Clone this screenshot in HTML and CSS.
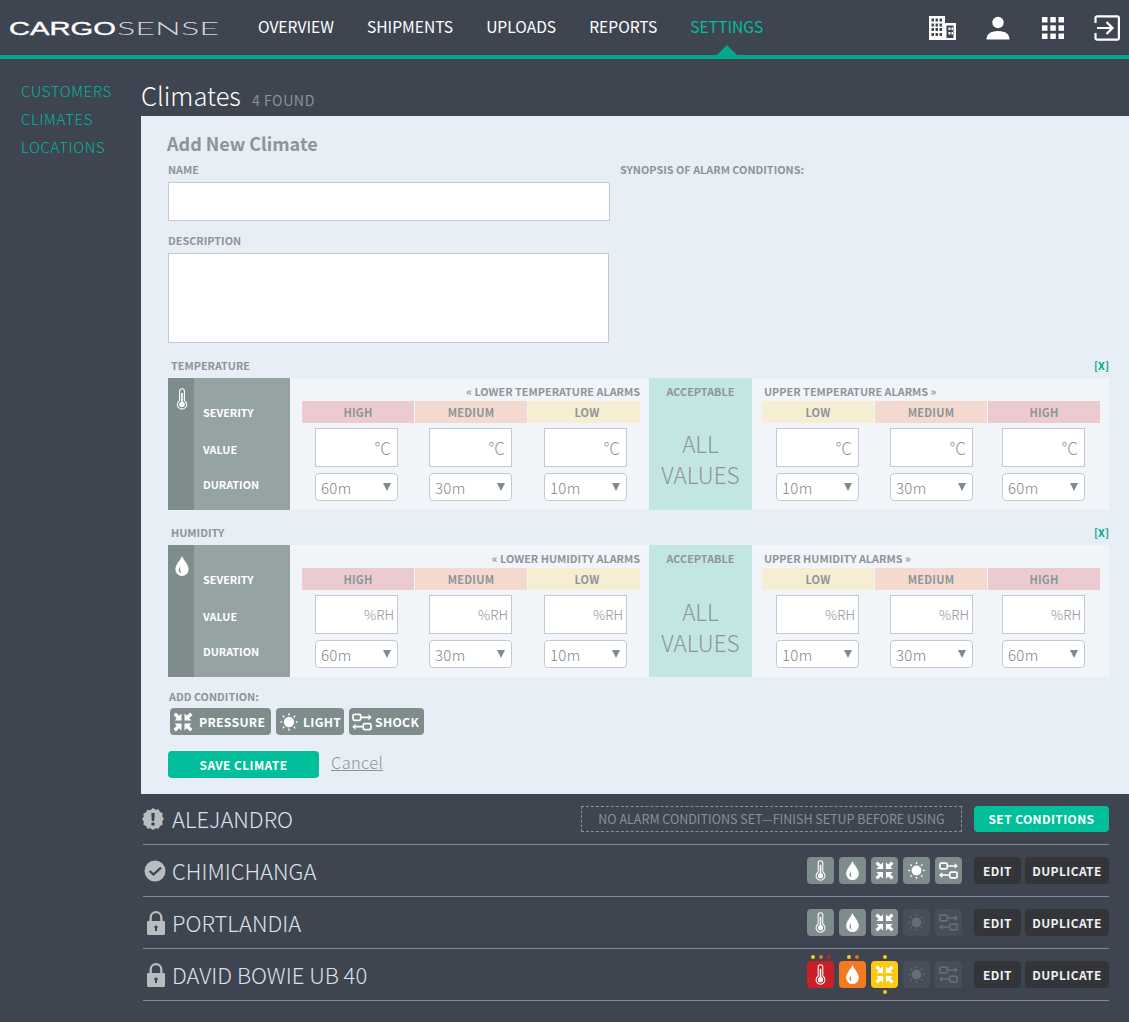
FILE: index.html
```html
<!DOCTYPE html>
<html lang="en">
<head>
<meta charset="utf-8">
<title>Climates</title>
<link rel="stylesheet" href="styles.css">
</head>
<body>
<svg class="defs" width="0" height="0">
  <symbol id="i-thermo" viewBox="0 0 24 24">
    <path d="M9.6 13.6V4.2a2.4 2.4 0 0 1 4.8 0v9.4a4.6 4.6 0 1 1-4.8 0z" fill="none" stroke="currentColor" stroke-width="1.1"/>
    <circle cx="12" cy="17.4" r="2.7" fill="currentColor"/>
    <rect x="11.2" y="6" width="1.6" height="10" fill="currentColor"/>
  </symbol>
  <symbol id="i-drop" viewBox="0 0 24 24">
    <path fill-rule="evenodd" d="M12 2c1 3.4 6.6 8.300 6.600 13.400A6.600 6.600 0 0 1 5.400 15.400C5.400 10.300 11 5.400 12 2zM10.300 12.500c-1.300 1.800-1.900 3.200-1.300 4.700.4 1 1.200 1.700 2.200 2-.9-1.800-1.300-3.900-.9-6.700z" fill="currentColor"/>
  </symbol>
  <symbol id="i-compress" viewBox="0 0 24 24">
    <g fill="currentColor">
      <path d="M10.500 10.500H3.500L5.800 8.200 2.500 4.900 4.900 2.500 8.200 5.800 10.500 3.500z"/>
      <path d="M13.500 10.500H20.500L18.200 8.200 21.500 4.900 19.100 2.500 15.800 5.800 13.500 3.500z"/>
      <path d="M10.500 13.500H3.500L5.800 15.800 2.500 19.100 4.900 21.500 8.200 18.200 10.500 20.500z"/>
      <path d="M13.500 13.500H20.500L18.200 15.800 21.500 19.100 19.100 21.500 15.800 18.200 13.500 20.500z"/>
    </g>
  </symbol>
  <symbol id="i-sun" viewBox="-2 -2 28 28">
    <g fill="currentColor">
      <circle cx="12" cy="12" r="6"/>
      <path d="M12 1l1.300 3h-2.600zM12 23l1.300-3h-2.600zM1 12l3-1.300v2.600zM23 12l-3-1.300v2.600zM4.200 4.200l3 1.100-1.900 1.900zM19.800 4.200l-3 1.100 1.900 1.900zM4.200 19.800l3-1.100-1.900-1.900zM19.800 19.800l-3-1.100 1.900-1.900z"/>
    </g>
  </symbol>
  <symbol id="i-shock" viewBox="-2 -2 28 28">
    <g fill="none" stroke="currentColor" stroke-width="2">
      <rect x="1.500" y="3" width="9" height="7" rx="1.800"/>
      <rect x="13.500" y="14" width="9" height="7" rx="1.800"/>
      <path d="M10 6.500h10M14 17.500H4"/>
    </g>
    <path d="M19.500 3l4 3.500-4 3.500zM4.500 14l-4 3.500 4 3.500z" fill="currentColor"/>
  </symbol>
  <symbol id="i-alert" viewBox="0 0 24 24">
    <path fill-rule="evenodd" d="M12 1l2.600 1.700 3-.5 1.400 2.700 2.700 1.400-.5 3L22.900 12l-1.700 2.600.5 3-2.700 1.400-1.400 2.700-3-.5L12 23l-2.600-1.700-3 .5L5 19.100l-2.700-1.400.5-3L1.100 12l1.700-2.600-.5-3L5 5.500l1.400-2.700 3 .5zM10.300 6l.5 8h2.400l.5-8zM12 15.200a1.800 1.800 0 1 0 0 3.600 1.800 1.800 0 0 0 0-3.600z" fill="currentColor"/>
  </symbol>
  <symbol id="i-check" viewBox="0 0 24 24">
    <path fill-rule="evenodd" d="M12 1.500a10.500 10.500 0 1 1 0 21 10.500 10.500 0 0 1 0-21zM17.200 7.800L10.500 14 7.300 11.200 5.800 12.800l4.700 4.200 8.200-7.600z" fill="currentColor"/>
  </symbol>
  <symbol id="i-lock" viewBox="0 0 24 24">
    <path fill-rule="evenodd" d="M12 0a6.600 6.600 0 0 1 6.500 6.600V10h1.300c.7 0 1.200.5 1.200 1.200v11.600c0 .7-.5 1.200-1.200 1.200H4.200C3.500 24 3 23.500 3 22.800V11.200C3 10.500 3.500 10 4.200 10h1.300V6.600A6.600 6.600 0 0 1 12 0zM12 2.300a4.300 4.300 0 0 0-4.200 4.300V10h8.400V6.600A4.300 4.300 0 0 0 12 2.300zM12 14.500a1.700 1.700 0 0 0-1 3.100V20h2v-2.400a1.700 1.700 0 0 0-1-3.100z" fill="currentColor"/>
  </symbol>
</svg>

<header class="topbar">
  <svg class="logo" width="212" height="26" viewBox="0 0 212 26" role="img" aria-label="CargoSense">
    <text class="logo-bold" x="0" y="20" textLength="107" lengthAdjust="spacingAndGlyphs">CARGO</text>
    <text class="logo-thin" x="108" y="20" textLength="102" lengthAdjust="spacingAndGlyphs">SENSE</text>
  </svg>
  <nav class="mainnav">
    <a>OVERVIEW</a>
    <a>SHIPMENTS</a>
    <a>UPLOADS</a>
    <a>REPORTS</a>
    <a class="active">SETTINGS</a>
  </nav>
  <div class="topicons">
    <svg width="29" height="26" viewBox="0 0 29 26">
      <path fill-rule="evenodd" fill="#fff" d="M1 1h16v7h11v17H1zM3.500 3.500v3h2.500v-3zM7.500 3.500v3h2.500v-3zM11.500 3.500v3h2.500v-3zM3.500 8.500v3h2.500v-3zM7.500 8.500v3h2.500v-3zM11.500 8.500v3h2.500v-3zM3.500 13v3h2.500v-3zM7.500 13v3h2.500v-3zM11.500 13v3h2.500v-3zM3.500 18v3h2.500v-3zM7.500 18v3h2.500v-3zM11.500 18v3h2.500v-3zM18.500 10.500v12.500h7V10.500zM20.500 12.500h2v2.500h-2zM20.500 17h2v2.500h-2z"/>
      <path fill="#fff" d="M23.500 12.500h1.500v2.500h-1.500zM23.500 17h1.500v2.500h-1.500z"/>
    </svg>
    <svg width="24" height="24" viewBox="0 0 24 24">
      <circle cx="12" cy="6.500" r="5.700" fill="#fff"/>
      <path d="M.500 23.500c0-5 3.500-8.500 11.500-8.500s11.500 3.500 11.500 8.500z" fill="#fff"/>
    </svg>
    <svg class="icon-grid" width="24" height="24" viewBox="0 0 24 24" fill="#fff">
      <rect x="1" y="1" width="5.500" height="5.500"/><rect x="9.300" y="1" width="5.500" height="5.500"/><rect x="17.500" y="1" width="5.500" height="5.500"/>
      <rect x="1" y="9.300" width="5.500" height="5.500"/><rect x="9.300" y="9.300" width="5.500" height="5.500"/><rect x="17.500" y="9.300" width="5.500" height="5.500"/>
      <rect x="1" y="17.500" width="5.500" height="5.500"/><rect x="9.300" y="17.500" width="5.500" height="5.500"/><rect x="17.500" y="17.500" width="5.500" height="5.500"/>
    </svg>
    <svg width="26" height="26" viewBox="0 0 26 26" fill="none" stroke="#fff" stroke-width="2.200">
      <path d="M1.500 8V3a1.700 1.700 0 0 1 1.700-1.700h20a1.700 1.700 0 0 1 1.700 1.700v20a1.700 1.700 0 0 1-1.700 1.700h-20A1.700 1.700 0 0 1 1.500 23v-5"/>
      <path d="M3 13h15M12.500 7l6 6-6 6"/>
    </svg>
  </div>
</header>

<div class="page">
  <aside class="sidebar">
    <a>CUSTOMERS</a>
    <a>CLIMATES</a>
    <a>LOCATIONS</a>
  </aside>
  <main class="content">
    <div class="titlebar">
      <h1>Climates</h1>
      <span class="count">4 FOUND</span>
    </div>

    <section class="panel">
      <h2>Add New Climate</h2>
      <div class="basics">
        <div class="basics-fields">
          <label class="flabel">NAME</label>
          <input class="field field-name" type="text">
          <label class="flabel flabel-desc">DESCRIPTION</label>
          <textarea class="field field-desc"></textarea>
        </div>
        <div class="flabel synopsis">SYNOPSIS OF ALARM CONDITIONS:</div>
      </div>

      <div class="cond-head cond-first"><span>TEMPERATURE</span><a class="remove">[X]</a></div>
      <div class="cond">
        <div class="cond-icon"><svg width="24" height="24"><use href="#i-thermo"/></svg></div>
        <div class="cond-labels"><span class="l-sev">SEVERITY</span><span class="l-val">VALUE</span><span class="l-dur">DURATION</span></div>
        <div class="side side-lower">
          <div class="side-title">« LOWER TEMPERATURE ALARMS</div>
          <div class="levels">
            <div class="level"><div class="sev high">HIGH</div><div class="val at13 deg">°C</div><div class="sel at13"><span>60m</span><i></i></div></div>
            <div class="level"><div class="sev med">MEDIUM</div><div class="val at14 deg">°C</div><div class="sel at14"><span>30m</span><i></i></div></div>
            <div class="level"><div class="sev low low-shift">LOW</div><div class="val at16 deg">°C</div><div class="sel at16"><span>10m</span><i></i></div></div>
          </div>
        </div>
        <div class="ok"><div class="ok-title">ACCEPTABLE</div><div class="ok-val">ALL<br>VALUES</div></div>
        <div class="side side-upper">
          <div class="side-title">UPPER TEMPERATURE ALARMS »</div>
          <div class="levels">
            <div class="level"><div class="sev low">LOW</div><div class="val at14 deg">°C</div><div class="sel at14"><span>10m</span><i></i></div></div>
            <div class="level"><div class="sev med">MEDIUM</div><div class="val at15 deg">°C</div><div class="sel at15"><span>30m</span><i></i></div></div>
            <div class="level"><div class="sev high">HIGH</div><div class="val at14 deg">°C</div><div class="sel at14"><span>60m</span><i></i></div></div>
          </div>
        </div>
      </div>

      <div class="cond-head"><span>HUMIDITY</span><a class="remove">[X]</a></div>
      <div class="cond">
        <div class="cond-icon"><svg width="24" height="24"><use href="#i-drop"/></svg></div>
        <div class="cond-labels"><span class="l-sev">SEVERITY</span><span class="l-val">VALUE</span><span class="l-dur">DURATION</span></div>
        <div class="side side-lower">
          <div class="side-title">« LOWER HUMIDITY ALARMS</div>
          <div class="levels">
            <div class="level"><div class="sev high">HIGH</div><div class="val at13 rh">%RH</div><div class="sel at13"><span>60m</span><i></i></div></div>
            <div class="level"><div class="sev med">MEDIUM</div><div class="val at14 rh">%RH</div><div class="sel at14"><span>30m</span><i></i></div></div>
            <div class="level"><div class="sev low low-shift">LOW</div><div class="val at16 rh">%RH</div><div class="sel at16"><span>10m</span><i></i></div></div>
          </div>
        </div>
        <div class="ok"><div class="ok-title">ACCEPTABLE</div><div class="ok-val ok-val-rh">ALL<br>VALUES</div></div>
        <div class="side side-upper">
          <div class="side-title">UPPER HUMIDITY ALARMS »</div>
          <div class="levels">
            <div class="level"><div class="sev low">LOW</div><div class="val at14 rh">%RH</div><div class="sel at14"><span>10m</span><i></i></div></div>
            <div class="level"><div class="sev med">MEDIUM</div><div class="val at15 rh">%RH</div><div class="sel at15"><span>30m</span><i></i></div></div>
            <div class="level"><div class="sev high">HIGH</div><div class="val at14 rh">%RH</div><div class="sel at14"><span>60m</span><i></i></div></div>
          </div>
        </div>
      </div>

      <div class="flabel add-label">ADD CONDITION:</div>
      <div class="add-row">
        <button class="add-btn add-pressure"><svg width="24" height="24"><use href="#i-compress"/></svg>PRESSURE</button>
        <button class="add-btn add-light"><svg width="24" height="24"><use href="#i-sun"/></svg>LIGHT</button>
        <button class="add-btn add-shock"><svg width="24" height="24"><use href="#i-shock"/></svg>SHOCK</button>
      </div>
      <div class="actions">
        <button class="save">SAVE CLIMATE</button>
        <a class="cancel">Cancel</a>
      </div>
    </section>

    <section class="list">
      <div class="row">
        <svg class="status st-alert" width="24" height="24"><use href="#i-alert"/></svg>
        <div class="row-name">ALEJANDRO</div>
        <div class="notice">NO ALARM CONDITIONS SET—FINISH SETUP BEFORE USING</div>
        <button class="set-btn">SET CONDITIONS</button>
      </div>
      <div class="row">
        <svg class="status st-check" width="24" height="24"><use href="#i-check"/></svg>
        <div class="row-name">CHIMICHANGA</div>
        <div class="chips">
          <span class="chip"><svg width="23" height="23"><use href="#i-thermo"/></svg></span>
          <span class="chip"><svg width="23" height="23"><use href="#i-drop"/></svg></span>
          <span class="chip"><svg width="23" height="23"><use href="#i-compress"/></svg></span>
          <span class="chip"><svg width="23" height="23"><use href="#i-sun"/></svg></span>
          <span class="chip"><svg width="23" height="23"><use href="#i-shock"/></svg></span>
        </div>
        <button class="dark-btn btn-edit">EDIT</button>
        <button class="dark-btn btn-dup">DUPLICATE</button>
      </div>
      <div class="row">
        <svg class="status st-lock" width="24" height="24"><use href="#i-lock"/></svg>
        <div class="row-name">PORTLANDIA</div>
        <div class="chips">
          <span class="chip"><svg width="23" height="23"><use href="#i-thermo"/></svg></span>
          <span class="chip"><svg width="23" height="23"><use href="#i-drop"/></svg></span>
          <span class="chip"><svg width="23" height="23"><use href="#i-compress"/></svg></span>
          <span class="chip chip-off"><svg width="23" height="23"><use href="#i-sun"/></svg></span>
          <span class="chip chip-off"><svg width="23" height="23"><use href="#i-shock"/></svg></span>
        </div>
        <button class="dark-btn btn-edit">EDIT</button>
        <button class="dark-btn btn-dup">DUPLICATE</button>
      </div>
      <div class="row">
        <svg class="status st-lock" width="24" height="24"><use href="#i-lock"/></svg>
        <div class="row-name">DAVID BOWIE UB 40</div>
        <div class="chips">
          <span class="chip chip-red"><span class="dots"><b class="d-y"></b><b class="d-o"></b><b class="d-r"></b></span><svg width="23" height="23"><use href="#i-thermo"/></svg></span>
          <span class="chip chip-orange"><span class="dots"><b class="d-y"></b><b class="d-o"></b></span><svg width="23" height="23"><use href="#i-drop"/></svg></span>
          <span class="chip chip-yellow"><span class="dots"><b class="d-y"></b></span><svg width="23" height="23"><use href="#i-compress"/></svg><span class="dots dots-below"><b class="d-y"></b></span></span>
          <span class="chip chip-off"><svg width="23" height="23"><use href="#i-sun"/></svg></span>
          <span class="chip chip-off"><svg width="23" height="23"><use href="#i-shock"/></svg></span>
        </div>
        <button class="dark-btn btn-edit">EDIT</button>
        <button class="dark-btn btn-dup">DUPLICATE</button>
      </div>
    </section>
  </main>
</div>
</body>
</html>
```

FILE: styles.css
```css
* { box-sizing: border-box; }
html, body { margin: 0; padding: 0; height: 1022px; overflow: hidden; }
body {
  background: #3e4550;
  font-family: "Noto Sans CJK SC", "Noto Sans", sans-serif;
  color: #8f9499;
}
.defs { position: absolute; }
button { font-family: inherit; border: 0; padding: 0; }

/* top bar */
.topbar {
  height: 59px;
  border-bottom: 4px solid #00a98a;
  display: flex;
  align-items: center;
  padding: 0 9px 0 9px;
}
.logo { flex: none; display: block; margin-top: 1px; }
.logo text { font-size: 18px; }
.logo-bold { font-family: "Liberation Sans", sans-serif; fill: #fff; stroke: #fff; stroke-width: .35px; }
.logo-thin { font-family: "Lato", sans-serif; font-weight: 300; fill: #d5d8db; }
.mainnav { display: flex; gap: 33px; margin-left: 37px; }
.mainnav a {
  position: relative;
  color: #fff;
  font-size: 15.600px;
  line-height: 53px;
  padding-bottom: 2px;
  white-space: nowrap;
}
.mainnav a.active { color: #00bf9a; }
.mainnav a.active::after {
  content: "";
  position: absolute;
  left: 50%;
  bottom: 0;
  margin-left: -10px;
  border-left: 10px solid transparent;
  border-right: 10px solid transparent;
  border-bottom: 10px solid #00a98a;
}
.topicons { margin-left: auto; display: flex; align-items: center; gap: 29px; }
.topicons svg { display: block; }
.topicons .icon-grid { margin-left: 2px; }

.page { display: flex; }
.sidebar {
  width: 141px;
  flex: none;
  padding: 18px 0 0 21px;
  display: flex;
  flex-direction: column;
}
.sidebar a {
  color: #00b594;
  font-size: 15px;
  line-height: 28px;
  font-weight: 300;
  letter-spacing: .6px;
}
.content { flex: 1; min-width: 0; }
.titlebar { height: 57px; display: flex; align-items: baseline; padding-top: 16px; }
.titlebar h1 { margin: 0; color: #fff; font-size: 25.500px; line-height: 40px; font-weight: 300; }
.count { margin-left: 11px; font-size: 14.200px; letter-spacing: .5px; color: #8a9097; }

/* form panel */
.panel { background: #e8eef5; height: 678px; padding: 15px 20px 0 27px; }
.panel h2 { margin: 0 0 0 -1px; font-size: 18px; line-height: 24px; font-weight: 700; color: #8f9499; }
.flabel { display: block; font-size: 10.850px; line-height: 12px; font-weight: 700; color: #8f9499; }
.basics { display: flex; margin-top: 8px; }
.basics-fields { width: 442px; flex: none; }
.field { display: block; background: #fff; border: 1px solid #c4cad3; margin: 0; padding: 0; resize: none; }
.field-name { width: 442px; height: 39px; margin-top: 7px; }
.flabel-desc { margin-top: 13px; }
.field-desc { width: 441px; height: 90px; margin-top: 7px; }
.synopsis { margin-left: 10px; }

.cond-head { display: flex; justify-content: space-between; margin: 16px 0 7px 3px; font-size: 10.850px; line-height: 12px; font-weight: 700; }
.cond-first { margin-top: 16px; }
.remove { color: #00a98a; }
.cond { display: flex; height: 132px; background: #f1f5f9; width: 941px; }
.cond-icon { width: 26px; flex: none; background: #7e8c8c; color: #fff; padding-top: 9px; }
.cond-icon svg { display: block; margin-left: 2px; }
.cond-labels { width: 96px; flex: none; background: #95a3a3; color: #fff; font-size: 10.850px; line-height: 12px; font-weight: 700; padding-left: 9px; display: flex; flex-direction: column; }
.l-sev { margin-top: 28px; }
.l-val { margin-top: 25px; }
.l-dur { margin-top: 23px; }
.side { flex: none; padding-top: 7px; }
.side-lower { width: 359px; padding-left: 12px; }
.side-upper { width: 357px; padding-left: 10px; }
.side-title { font-size: 10.850px; line-height: 12px; font-weight: 700; height: 16px; }
.side-lower .side-title { text-align: right; padding-right: 9px; width: 347px; }
.side-upper .side-title { padding-left: 2px; }
.levels { display: grid; grid-template-columns: repeat(3, 112px); column-gap: 1px; }
.sev { height: 22px; font-size: 11px; line-height: 22px; font-weight: 700; letter-spacing: .2px; text-align: center; }
.low-shift { padding-left: 6px; }
.high { background: #ebcbd0; }
.med { background: #f4d9cf; }
.low { background: #f6eed2; }
.val { width: 83px; height: 39px; margin-top: 5px; background: #fff; border: 1px solid #c4cad3; text-align: right; color: #8f9499; }
.deg { font-size: 17px; line-height: 37px; padding-right: 6px; font-weight: 300; }
.rh { font-size: 13.500px; line-height: 37px; padding-right: 3px; font-weight: 300; }
.sel { width: 83px; height: 28px; margin-top: 6px; background: #fff; border: 1px solid #c4cad3; border-radius: 4px; display: flex; align-items: center; justify-content: space-between; padding: 0 6px 0 5px; font-size: 15px; font-weight: 300; letter-spacing: .3px; color: #7f858b; }
.sel i { width: 0; height: 0; border-left: 4px solid transparent; border-right: 4px solid transparent; border-top: 8px solid #7e8c8c; margin-top: -1px; }
.at13 { margin-left: 13px; }
.at14 { margin-left: 14px; }
.at15 { margin-left: 15px; }
.at16 { margin-left: 16px; }
.ok { width: 103px; flex: none; background: #c2e7e3; text-align: center; padding-top: 7px; }
.ok-title { font-size: 10.850px; line-height: 12px; font-weight: 700; }
.ok-val { margin-top: 31px; font-size: 22.500px; line-height: 31px; font-weight: 300; color: #8f9499; }
.ok-val-rh { margin-top: 32px; }

.add-label { margin: 13px 0 0 1px; }
.add-row { display: flex; gap: 5px; margin: 6px 0 0 2px; }
.add-btn { height: 27px; display: flex; align-items: center; background: #7e8c8c; color: #fff; border-radius: 4px; font-size: 12.200px; font-weight: 700; letter-spacing: .3px; padding: 0 0 0 1px; gap: 4px; }
.add-pressure { width: 101px; }
.add-light { width: 68px; gap: 2px; }
.add-shock { width: 75px; gap: 1px; }
.actions { display: flex; align-items: center; margin-top: 16px; }
.save { width: 151px; height: 27px; background: #00bf9a; color: #fff; border-radius: 4px; font-size: 12px; font-weight: 700; letter-spacing: .4px; }
.cancel { margin-left: 12px; font-size: 16.500px; line-height: 20px; text-decoration: underline; color: #8f9499; font-weight: 300; letter-spacing: .3px; margin-top: -5px; }

/* list */
.list { padding: 0 20px 0 2px; margin-top: -1px; }
.row { position: relative; height: 52px; display: flex; align-items: center; border-bottom: 1px solid #868c95; }
.status { flex: none; color: #b8bdc2; margin-top: 1px; }
.st-alert { margin-left: -2px; margin-right: 7px; }
.st-check { margin-right: 5px; }
.st-lock { margin-left: 1px; margin-right: 4px; }
.row-name { padding-bottom: 2px; font-size: 22px; line-height: 30px; color: #dae2ea; font-weight: 300; white-space: nowrap; }
.notice { margin-left: auto; width: 381px; height: 26px; border: 1px dashed #8a9097; text-align: center; font-size: 12.500px; line-height: 24px; color: #8a9097; white-space: nowrap; }
.set-btn { margin-left: 12px; width: 135px; height: 26px; background: #00bf9a; color: #fff; border-radius: 4px; font-size: 12px; font-weight: 700; letter-spacing: .4px; }
.chips { margin-left: auto; display: flex; gap: 5px; }
.chip { position: relative; width: 27px; height: 27px; border-radius: 4px; background: #7e8c8c; color: #fff; display: flex; align-items: center; justify-content: center; }
.chip svg { display: block; }
.chip-off { background: #474e59; color: #666d77; }
.chip-red { background: #ca1e29; }
.chip-orange { background: #f37a21; }
.chip-yellow { background: #fdc911; }
.dots { position: absolute; left: 0; right: 0; top: -6px; display: flex; justify-content: center; gap: 4px; height: 4px; }
.dots-below { top: 29px; }
.dots b { display: block; width: 4px; height: 4px; border-radius: 50%; }
.d-y { background: #fdc911; }
.d-o { background: #e86f25; }
.d-r { background: #ca1e29; }
.dark-btn { height: 27px; background: #343538; color: #eef1f4; border-radius: 4px; font-size: 12px; font-weight: 700; letter-spacing: .4px; }
.btn-edit { width: 47px; margin-left: 12px; }
.btn-dup { width: 84px; margin-left: 4px; }
```
